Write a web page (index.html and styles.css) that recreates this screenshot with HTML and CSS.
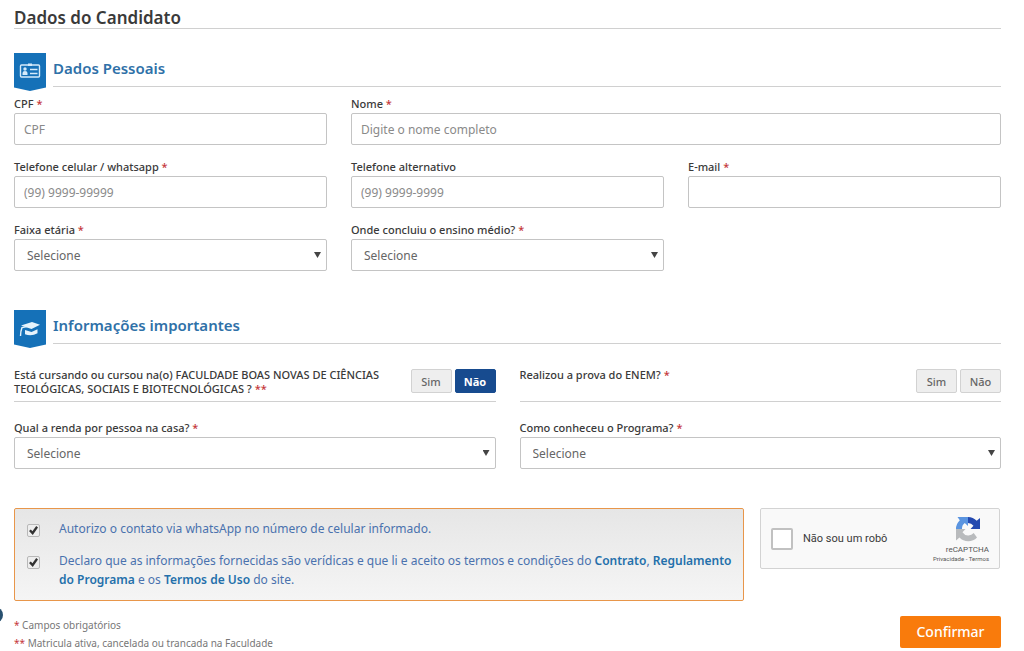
FILE: index.html
```html
<!DOCTYPE html>
<html lang="pt-BR">
<head>
<meta charset="utf-8">
<meta name="viewport" content="width=device-width, initial-scale=1">
<title>Dados do Candidato</title>
<link rel="stylesheet" href="styles.css">
</head>
<body>
<form class="page">
  <h1 class="page-title">Dados do Candidato</h1>

  <section class="section">
    <header class="section-head">
      <svg class="badge" viewBox="0 0 32 38" aria-hidden="true">
        <path fill="#1571b8" d="M0 0h32v34.500L16 38 0 34.500z"/>
        <rect x="6.500" y="12" width="19" height="12" rx="1" fill="none" stroke="#d5eafa" stroke-width="1.400"/>
        <path fill="#d5eafa" d="M14 10.500h4v2.500h-4zM8.500 22v-2q0-2 2.500-2t2.500 2v2z"/>
        <circle cx="11" cy="16" r="1.700" fill="#d5eafa"/>
        <path d="M16 16.500h7.500M16 20.500h7.500" stroke="#d5eafa" stroke-width="1.500"/>
      </svg>
      <h2 class="section-title">Dados Pessoais</h2>
    </header>
    <div class="grid three">
      <div class="field">
        <label for="cpf">CPF <span class="req">*</span></label>
        <input class="control" id="cpf" type="text" placeholder="CPF">
      </div>
      <div class="field wide">
        <label for="nome">Nome <span class="req">*</span></label>
        <input class="control" id="nome" type="text" placeholder="Digite o nome completo">
      </div>
      <div class="field">
        <label for="celular">Telefone celular / whatsapp <span class="req">*</span></label>
        <input class="control" id="celular" type="tel" placeholder="(99) 9999-99999">
      </div>
      <div class="field">
        <label for="telefone">Telefone alternativo</label>
        <input class="control" id="telefone" type="tel" placeholder="(99) 9999-9999">
      </div>
      <div class="field">
        <label for="email">E-mail <span class="req">*</span></label>
        <input class="control" id="email" type="email">
      </div>
      <div class="field">
        <label for="idade">Faixa etária <span class="req">*</span></label>
        <div class="select"><select class="control" id="idade"><option>Selecione</option></select></div>
      </div>
      <div class="field">
        <label for="ensino">Onde concluiu o ensino médio? <span class="req">*</span></label>
        <div class="select"><select class="control" id="ensino"><option>Selecione</option></select></div>
      </div>
    </div>
  </section>

  <section class="section">
    <header class="section-head">
      <svg class="badge" viewBox="0 0 32 38" aria-hidden="true">
        <path fill="#1571b8" d="M0 0h32v34.500L16 38 0 34.500z"/>
        <path fill="#e6f3fc" d="M7 15.500 18 12l8 2.800-8.500 4.200zM11 20l6.500 2 6-2.800v4q-6 3.500-12.500 1z"/>
        <path fill="none" stroke="#e6f3fc" stroke-width="1.400" d="m17.500 15.500-9.500 2q-1.500 4-1.500 8.500"/>
        <path fill="none" stroke="#1571b8" stroke-width=".8" d="m9.500 18.500 8 2 7-3.500"/>
      </svg>
      <h2 class="section-title">Informações importantes</h2>
    </header>
    <div class="grid two questions">
      <div class="question">
        <p class="question-text" id="q1">Está cursando ou cursou na(o) FACULDADE BOAS NOVAS DE CIÊNCIAS TEOLÓGICAS, SOCIAIS E BIOTECNOLÓGICAS ? <span class="req">**</span></p>
        <div class="toggle" role="group" aria-labelledby="q1">
          <button type="button" class="choice">Sim</button>
          <button type="button" class="choice active">Não</button>
        </div>
      </div>
      <div class="question">
        <p class="question-text" id="q2">Realizou a prova do ENEM? <span class="req">*</span></p>
        <div class="toggle" role="group" aria-labelledby="q2">
          <button type="button" class="choice">Sim</button>
          <button type="button" class="choice">Não</button>
        </div>
      </div>
    </div>
    <div class="grid two">
      <div class="field">
        <label for="renda">Qual a renda por pessoa na casa? <span class="req">*</span></label>
        <div class="select"><select class="control" id="renda"><option>Selecione</option></select></div>
      </div>
      <div class="field">
        <label for="origem">Como conheceu o Programa? <span class="req">*</span></label>
        <div class="select"><select class="control" id="origem"><option>Selecione</option></select></div>
      </div>
    </div>
  </section>

  <div class="consent-row">
    <div class="consent">
      <div class="consent-item">
        <input class="check" type="checkbox" id="contato" checked>
        <label for="contato">Autorizo o contato via whatsApp no número de celular informado.</label>
      </div>
      <div class="consent-item">
        <input class="check" type="checkbox" id="termos" checked>
        <label for="termos">Declaro que as informações fornecidas são verídicas e que li e aceito os termos e condições do <a href="#contrato">Contrato</a>, <a href="#regulamento">Regulamento do Programa</a> e os <a href="#termos-de-uso">Termos de Uso</a> do site.</label>
      </div>
    </div>
    <div class="captcha">
      <input class="captcha-box" type="checkbox" id="robo">
      <label class="captcha-label" for="robo">Não sou um robô</label>
      <div class="captcha-brand">
        <svg class="captcha-logo" viewBox="0 0 26 26" aria-hidden="true">
          <path fill="#2349b0" d="M13 1a12 12 0 0 1 8.700 3.800L25 2v11h-9.500l3-3.200A7 7 0 0 0 13 7z"/>
          <path fill="#5a94e0" d="M13 1v9L9.800 7A7 7 0 0 0 7 13H1a12 12 0 0 1 3.800-8.800L2.500 1z"/>
          <path fill="#b9bbbd" d="M1 13h9.500l-3 3.200a7 7 0 0 0 11.200.8l3.300 4.500a12 12 0 0 1-17.500 0L1 24.500z"/>
        </svg>
        <span class="captcha-name">reCAPTCHA</span>
        <span class="captcha-links"><a href="#privacidade">Privacidade</a> - <a href="#termos-captcha">Termos</a></span>
      </div>
    </div>
  </div>

  <footer class="footer">
    <div class="notes">
      <p><span class="req">*</span> Campos obrigatórios</p>
      <p><span class="req">**</span> Matricula ativa, cancelada ou trancada na Faculdade</p>
    </div>
    <button type="submit" class="submit">Confirmar</button>
  </footer>
</form>
<span class="side-tab" aria-hidden="true"></span>
</body>
</html>
```
FILE: styles.css
```css
* {
  box-sizing: border-box;
}

body {
  margin: 0;
  background: #fff;
  color: #3a3a3a;
  font-family: "Noto Sans", "Open Sans", sans-serif;
  font-size: 12px;
}

h1, h2, p {
  margin: 0;
}

button, input, select {
  font-family: inherit;
  margin: 0;
}

a {
  color: #2470ab;
  font-weight: 600;
  text-decoration: none;
}

.page {
  padding: 7px 23px 0 14px;
}

.page-title {
  border-bottom: 1px solid #d0d0d0;
  font-size: 17px;
  font-weight: 600;
  line-height: 21px;
}

.section {
  margin-top: 24px;
}

.section + .section {
  margin-top: 39px;
}

.section-head {
  display: flex;
  align-items: flex-start;
  gap: 7px;
  margin-bottom: 6px;
}

.badge {
  flex: none;
  width: 32px;
  height: 38px;
}

.section-title {
  flex: 1;
  height: 34px;
  border-bottom: 1px solid #d0d0d0;
  color: #2f71a8;
  font-size: 15px;
  font-weight: 600;
  line-height: 30px;
}

.grid {
  display: grid;
  gap: 15px 24px;
}

.three {
  grid-template-columns: repeat(3, 1fr);
}

.two {
  grid-template-columns: repeat(2, 1fr);
}

.wide {
  grid-column: span 2;
}

.field {
  display: flex;
  flex-direction: column;
  gap: 2px;
}

.field > label {
  font-size: 11px;
  font-weight: 500;
  line-height: 14px;
}

.req {
  color: #c5373b;
}

.control {
  width: 100%;
  height: 32px;
  padding: 1px 9px 0;
  border: 1px solid #c4c4c4;
  border-radius: 2px;
  background: #fff;
  color: #666;
  font-size: 12px;
}

.control::placeholder {
  color: #8a8a8a;
}

.select {
  position: relative;
}

.select .control {
  display: block;
  appearance: none;
  padding: 1px 12px 0;
}

.select::after {
  content: "";
  position: absolute;
  top: 13px;
  right: 6px;
  width: 7px;
  height: 6px;
  background: #444;
  clip-path: polygon(0 0, 100% 0, 50% 100%);
  pointer-events: none;
}

.questions {
  margin: 20px 0 19px;
}

.question {
  display: flex;
  align-items: flex-start;
  justify-content: space-between;
  gap: 12px;
  padding-bottom: 5px;
  border-bottom: 1px solid #d0d0d0;
}

.question-text {
  font-size: 11px;
  font-weight: 500;
  line-height: 14px;
}

.toggle {
  display: flex;
  gap: 3px;
  padding-top: 1px;
}

.choice {
  width: 41px;
  height: 24px;
  padding: 0;
  border: 1px solid #d2d2d2;
  border-radius: 2px;
  background: #eee;
  color: #666;
  font-size: 11px;
  font-weight: 500;
}

.choice.active {
  border-color: #174b8f;
  background: #174b8f;
  color: #fff;
  font-weight: 700;
}

.consent-row {
  display: flex;
  align-items: flex-start;
  gap: 16px;
  margin-top: 39px;
}

.consent {
  display: flex;
  flex: 1;
  flex-direction: column;
  gap: 13px;
  padding: 10px 6px 11px 12px;
  border: 1px solid #e8964a;
  border-radius: 2px;
  background: linear-gradient(#e6e6e6, #f5f5f5) padding-box;
  color: #4a72ae;
}

.consent-item {
  display: flex;
  align-items: flex-start;
  gap: 19px;
  line-height: 19px;
}

.check {
  flex: none;
  display: grid;
  place-items: center;
  width: 13px;
  height: 13px;
  margin-top: 5px;
  appearance: none;
  border: 1px solid #b8b8b8;
  border-radius: 2px;
  background: #eee;
}

.check:checked::before {
  content: "";
  width: 9px;
  height: 9px;
  background: #333;
  clip-path: polygon(0 56%, 20% 38%, 38% 58%, 80% 0, 100% 16%, 42% 100%);
}

.captcha {
  display: flex;
  align-items: center;
  width: 240px;
  height: 61px;
  margin-right: 1px;
  padding: 0 10px;
  border: 1px solid #d3d3d3;
  border-radius: 2px;
  background: #f9f9f9;
  font-family: Roboto, sans-serif;
}

.captcha-box {
  flex: none;
  width: 22px;
  height: 22px;
  appearance: none;
  border: 2px solid #c1c1c1;
  border-radius: 2px;
  background: #fff;
}

.captcha-label {
  flex: 1;
  padding-left: 10px;
  font-size: 11px;
}

.captcha-brand {
  display: flex;
  flex-direction: column;
  align-items: flex-end;
  color: #555;
}

.captcha-logo {
  width: 26px;
  height: 26px;
  margin: 2px 8px 3px 0;
}

.captcha-name {
  font-size: 8px;
  line-height: 10px;
}

.captcha-links {
  font-size: 6px;
  line-height: 8px;
}

.captcha-links a {
  color: inherit;
  font-weight: 400;
}

.footer {
  display: flex;
  align-items: flex-start;
  justify-content: space-between;
  padding-top: 15px;
}

.notes {
  color: #777;
  font-size: 10px;
  line-height: 18px;
}

.submit {
  width: 101px;
  height: 32px;
  padding: 0 0 2px;
  border: 0;
  border-radius: 2px;
  background: #f97b0c;
  color: #fff;
  font-size: 14px;
  font-weight: 500;
}

.side-tab {
  position: fixed;
  top: 607px;
  left: -13px;
  width: 16px;
  height: 16px;
  border-radius: 50%;
  background: #28506f;
}
```
